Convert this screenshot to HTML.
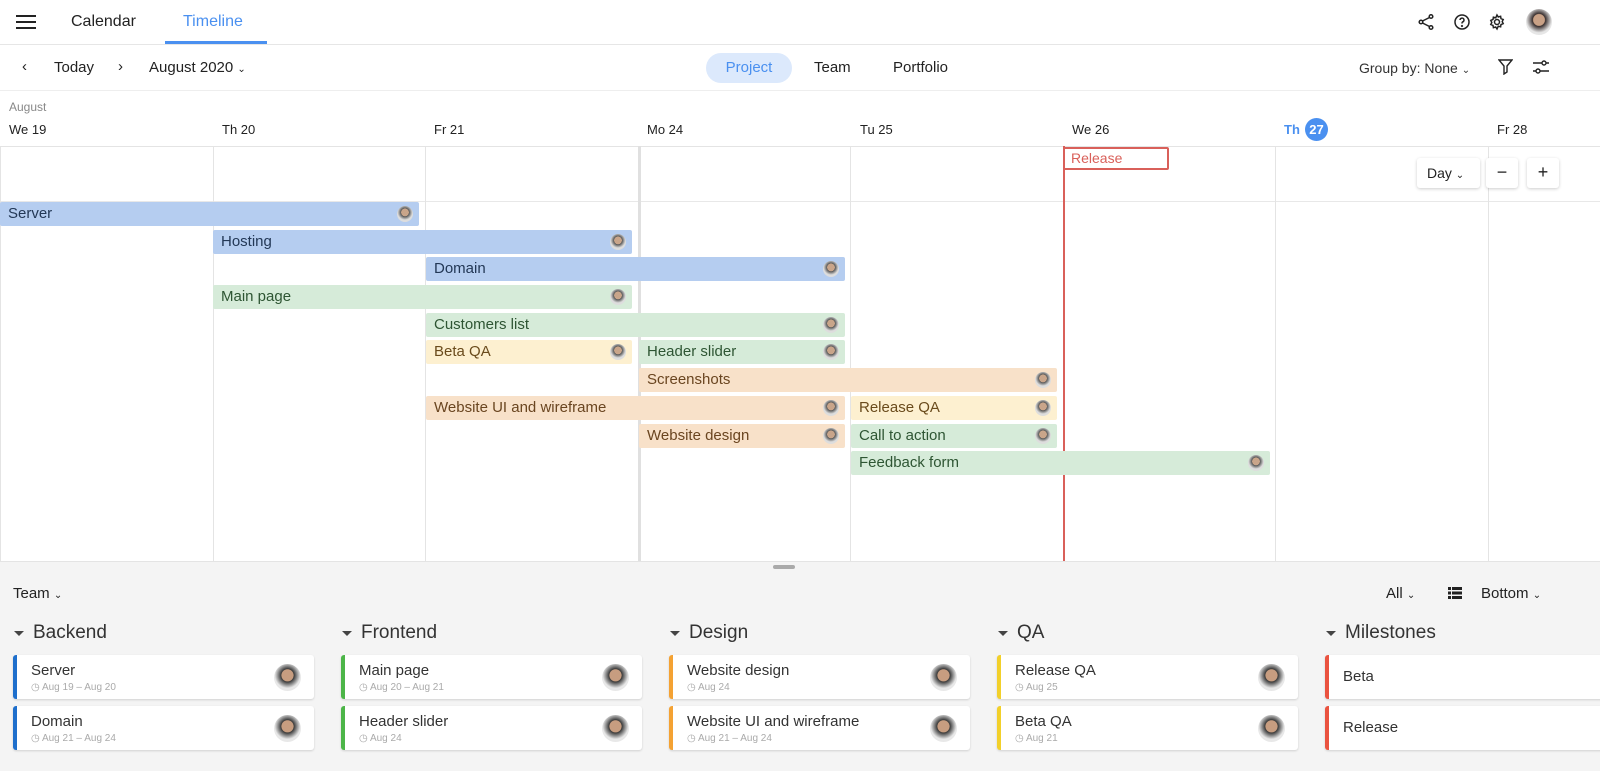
<!DOCTYPE html><html><head><style>
*{box-sizing:border-box;margin:0;padding:0}
body{width:1600px;height:771px;overflow:hidden;font-family:"Liberation Sans",sans-serif;background:#fff;color:#222;position:relative}
.a{position:absolute}
.bar{position:absolute;height:24px;font-size:15px;line-height:24px;padding-left:8px;border-radius:2px}
.bar i{position:absolute;right:6px;top:4px;width:16px;height:16px;border-radius:50%;background:radial-gradient(circle at 50% 40%,#c9a58a 30%,#555 32%,#ddd 60%)}
.b{background:#b5cdf0;color:#233856}.g{background:#d6ebd9;color:#2e5533}.y{background:#fdf0d0;color:#6a4b1c}.o{background:#f8e1c9;color:#6a4520}
.vl{position:absolute;top:146px;height:415px;width:1px;background:#e4e4e4}
.dh{position:absolute;top:122px;font-size:13px;color:#222}
.col{position:absolute;top:622px;width:301px}
.col h3{font-weight:normal;font-size:19px;color:#333;height:22px;line-height:22px;padding-left:20px;position:relative}
.col h3:before{content:"";position:absolute;left:1px;top:9px;border:5px solid transparent;border-top:5px solid #444;border-bottom:0}
.card{position:absolute;left:0;width:301px;height:44px;background:#fff;border-radius:3px;box-shadow:0 1px 2px rgba(0,0,0,.15);border-left:4px solid}
.card .t{position:absolute;left:14px;top:7px;font-size:15px;color:#333}
.card .d{position:absolute;left:14px;top:27px;font-size:10px;color:#aaa}
.card .av{position:absolute;right:13px;top:9px;width:27px;height:27px;border-radius:50%;background:radial-gradient(circle at 50% 42%,#c79d80 28%,#3a3a3a 31%,#e8e8e8 62%)}
</style></head><body>
<!-- top bar -->
<div class="a" style="left:16px;top:15px;width:20px;height:2px;background:#222;box-shadow:0 6px 0 #222,0 12px 0 #222"></div>
<div class="a" style="left:71px;top:13px;font-size:16px">Calendar</div>
<div class="a" style="left:183px;top:13px;font-size:16px;color:#4a90f0">Timeline</div>
<div class="a" style="left:165px;top:41px;width:102px;height:3px;background:#4a90f0"></div>
<div class="a" style="left:0;top:44px;width:1600px;height:1px;background:#e6e6e6"></div>
<svg class="a" style="left:1417px;top:13px" width="18" height="18" viewBox="0 0 18 18" fill="none" stroke="#222" stroke-width="1.5"><circle cx="14" cy="3.5" r="1.8"/><circle cx="4" cy="9" r="1.8"/><circle cx="14" cy="14.5" r="1.8"/><path d="M5.5 8 12.5 4.5M5.5 10l7 3.5"/></svg>
<svg class="a" style="left:1453px;top:13px" width="18" height="18" viewBox="0 0 18 18" fill="none" stroke="#222" stroke-width="1.5"><circle cx="9" cy="9" r="7"/><path d="M7 7a2 2 0 1 1 2.5 2c-.5.3-.5.8-.5 1.5"/><circle cx="9" cy="13" r=".4"/></svg>
<svg class="a" style="left:1488px;top:13px" width="18" height="18" viewBox="0 0 18 18" fill="none" stroke="#222" stroke-width="1.5"><circle cx="9" cy="9" r="2.5"/><path d="M9 2l1.3 2 2.3-.7.4 2.3 2.2.9-1 2.1 1 2-2.2.9-.4 2.3-2.3-.6L9 16l-1.3-2-2.3.7-.4-2.3-2.2-.9 1-2-1-2.1 2.2-.9.4-2.3 2.3.7z"/></svg>
<div class="a" style="left:1526px;top:9px;width:26px;height:26px;border-radius:50%;background:radial-gradient(circle at 50% 42%,#c9a186 28%,#3a3030 32%,#e6e6e6 64%)"></div>
<!-- toolbar -->
<div class="a" style="left:22px;top:58px;font-size:15px">‹</div>
<div class="a" style="left:54px;top:59px;font-size:15px">Today</div>
<div class="a" style="left:118px;top:58px;font-size:15px">›</div>
<div class="a" style="left:149px;top:59px;font-size:15px">August 2020 <span style="font-size:10px">⌄</span></div>
<div class="a" style="left:706px;top:53px;width:86px;height:30px;border-radius:15px;background:#dce9fc;color:#4a90f0;font-size:15px;text-align:center;line-height:30px">Project</div>
<div class="a" style="left:814px;top:59px;font-size:15px">Team</div>
<div class="a" style="left:893px;top:59px;font-size:15px">Portfolio</div>
<div class="a" style="left:1359px;top:60px;font-size:14px;color:#333">Group by: None <span style="font-size:10px">⌄</span></div>
<svg class="a" style="left:1498px;top:59px" width="15" height="16" viewBox="0 0 15 16" fill="none" stroke="#222" stroke-width="1.4"><path d="M1 1h13L9 7v6l-3 2V7z"/></svg>
<svg class="a" style="left:1532px;top:59px" width="18" height="16" viewBox="0 0 18 16" fill="none" stroke="#222" stroke-width="1.4"><path d="M1 4h9M14 4h3M1 12h3M8 12h9"/><circle cx="12" cy="4" r="2"/><circle cx="6" cy="12" r="2"/></svg>
<div class="a" style="left:0;top:90px;width:1600px;height:1px;background:#eee"></div>
<!-- dates -->
<div class="a" style="left:9px;top:100px;font-size:12px;color:#888">August</div>
<div class="dh" style="left:9px">We 19</div><div class="dh" style="left:222px">Th 20</div><div class="dh" style="left:434px">Fr 21</div><div class="dh" style="left:647px">Mo 24</div><div class="dh" style="left:860px">Tu 25</div><div class="dh" style="left:1072px">We 26</div>
<div class="dh" style="left:1284px;color:#4a90f0;font-weight:bold">Th</div>
<div class="a" style="left:1305px;top:118px;width:23px;height:23px;border-radius:50%;background:#4a90f0;color:#fff;font-size:13px;font-weight:bold;text-align:center;line-height:23px">27</div>
<div class="dh" style="left:1497px">Fr 28</div>
<div class="a" style="left:0;top:146px;width:1600px;height:1px;background:#e4e4e4"></div>
<div class="a" style="left:0;top:201px;width:1600px;height:1px;background:#e8e8e8"></div>
<div class="vl" style="left:0"></div><div class="vl" style="left:213px"></div><div class="vl" style="left:425px"></div><div class="vl" style="left:638px;width:3px;background:#e0e0e0"></div><div class="vl" style="left:850px"></div><div class="vl" style="left:1275px"></div><div class="vl" style="left:1488px"></div>
<div class="a" style="left:1063px;top:146px;width:2px;height:415px;background:#d9605a"></div>
<div class="a" style="left:1063px;top:147px;width:106px;height:23px;border:2px solid #d9605a;border-radius:2px;background:#fff;color:#d9605a;font-size:14px;line-height:19px;padding-left:6px">Release</div>
<div class="a" style="left:1417px;top:158px;width:63px;height:30px;background:#fff;border-radius:3px;box-shadow:0 1px 3px rgba(0,0,0,.2);font-size:14px;line-height:30px;padding-left:10px">Day <span style="font-size:10px">⌄</span></div>
<div class="a" style="left:1486px;top:158px;width:32px;height:30px;background:#fff;border-radius:3px;box-shadow:0 1px 3px rgba(0,0,0,.2);font-size:18px;line-height:28px;text-align:center">−</div>
<div class="a" style="left:1527px;top:158px;width:32px;height:30px;background:#fff;border-radius:3px;box-shadow:0 1px 3px rgba(0,0,0,.2);font-size:18px;line-height:28px;text-align:center">+</div>
<!-- bars -->
<div class="bar b" style="left:0;top:202px;width:419px">Server<i></i></div>
<div class="bar b" style="left:213px;top:230px;width:419px">Hosting<i></i></div>
<div class="bar b" style="left:426px;top:257px;width:419px">Domain<i></i></div>
<div class="bar g" style="left:213px;top:285px;width:419px">Main page<i></i></div>
<div class="bar g" style="left:426px;top:313px;width:419px">Customers list<i></i></div>
<div class="bar y" style="left:426px;top:340px;width:206px">Beta QA<i></i></div>
<div class="bar g" style="left:639px;top:340px;width:206px">Header slider<i></i></div>
<div class="bar o" style="left:639px;top:368px;width:418px">Screenshots<i></i></div>
<div class="bar o" style="left:426px;top:396px;width:419px">Website UI and wireframe<i></i></div>
<div class="bar y" style="left:851px;top:396px;width:206px">Release QA<i></i></div>
<div class="bar o" style="left:639px;top:424px;width:206px">Website design<i></i></div>
<div class="bar g" style="left:851px;top:424px;width:206px">Call to action<i></i></div>
<div class="bar g" style="left:851px;top:451px;width:419px">Feedback form<i></i></div>
<!-- bottom -->
<div class="a" style="left:0;top:561px;width:1600px;height:210px;background:#f4f4f4;border-top:1px solid #e4e4e4"></div>
<div class="a" style="left:773px;top:565px;width:22px;height:4px;border-radius:2px;background:#aaa"></div>
<div class="a" style="left:13px;top:585px;font-size:15px">Team <span style="font-size:10px">⌄</span></div>
<div class="a" style="left:1386px;top:585px;font-size:15px">All <span style="font-size:10px">⌄</span></div>
<svg class="a" style="left:1448px;top:587px" width="14" height="12" viewBox="0 0 14 12" fill="#222"><rect x="0" y="0" width="3" height="3"/><rect x="4" y="0" width="10" height="3"/><rect x="0" y="4.5" width="3" height="3"/><rect x="4" y="4.5" width="10" height="3"/><rect x="0" y="9" width="3" height="3"/><rect x="4" y="9" width="10" height="3"/></svg>
<div class="a" style="left:1481px;top:585px;font-size:15px">Bottom <span style="font-size:10px">⌄</span></div>

<div class="col" style="left:13px"><h3>Backend</h3>
<div class="card" style="top:33px;border-color:#1e6fcc"><div class="t">Server</div><div class="d">◷ Aug 19 – Aug 20</div><div class="av"></div></div>
<div class="card" style="top:84px;border-color:#1e6fcc"><div class="t">Domain</div><div class="d">◷ Aug 21 – Aug 24</div><div class="av"></div></div></div>
<div class="col" style="left:341px"><h3>Frontend</h3>
<div class="card" style="top:33px;border-color:#4cb548"><div class="t">Main page</div><div class="d">◷ Aug 20 – Aug 21</div><div class="av"></div></div>
<div class="card" style="top:84px;border-color:#4cb548"><div class="t">Header slider</div><div class="d">◷ Aug 24</div><div class="av"></div></div></div>
<div class="col" style="left:669px"><h3>Design</h3>
<div class="card" style="top:33px;border-color:#f4a233"><div class="t">Website design</div><div class="d">◷ Aug 24</div><div class="av"></div></div>
<div class="card" style="top:84px;border-color:#f4a233"><div class="t">Website UI and wireframe</div><div class="d">◷ Aug 21 – Aug 24</div><div class="av"></div></div></div>
<div class="col" style="left:997px"><h3>QA</h3>
<div class="card" style="top:33px;border-color:#f2d02a"><div class="t">Release QA</div><div class="d">◷ Aug 25</div><div class="av"></div></div>
<div class="card" style="top:84px;border-color:#f2d02a"><div class="t">Beta QA</div><div class="d">◷ Aug 21</div><div class="av"></div></div></div>
<div class="col" style="left:1325px"><h3>Milestones</h3>
<div class="card" style="top:33px;border-color:#ea5340;width:280px"><div class="t" style="top:13px">Beta</div></div>
<div class="card" style="top:84px;border-color:#ea5340;width:280px"><div class="t" style="top:13px">Release</div></div></div>
</body></html>
